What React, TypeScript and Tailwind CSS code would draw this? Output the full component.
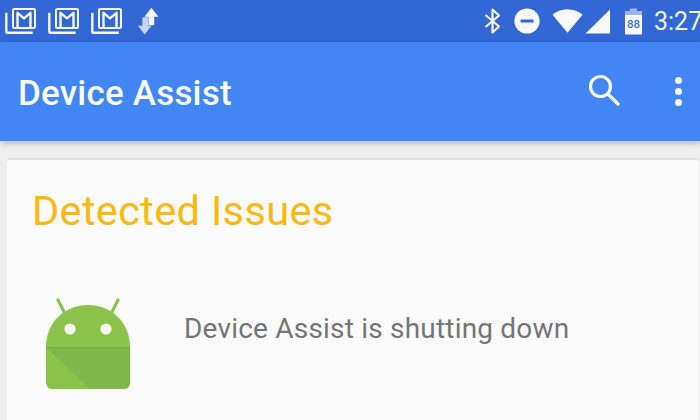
const font = "[font-family:Roboto,'Liberation_Sans',sans-serif]";

function GmailIcon() {
  return (
    <svg width="31" height="26" viewBox="0 0 31 26" fill="none" className="shrink-0">
      <path d="M1.300 6V23.700a1 1 0 0 0 1 1H26.500" stroke="#f4f7fe" strokeWidth="2.400" strokeLinecap="square" />
      <rect x="8" y="1" width="22" height="19" rx="1.200" stroke="#f4f7fe" strokeWidth="2" />
      <path d="M12.500 19V4.800L19 10.300l6.500-5.500V19" stroke="#f4f7fe" strokeWidth="2.400" strokeLinejoin="round" />
    </svg>
  );
}

function SyncIcon() {
  return (
    <svg width="21" height="29" viewBox="0 0 22 30" className="shrink-0">
      <path d="M7 28.600 0 19.500h4.600v-9h6v9H14z" fill="#c7d6f6" />
      <path d="M14 .7 21.400 10H17v9h-6v-9H6.800z" fill="#f4f7fe" />
    </svg>
  );
}

function StatusIcons() {
  return (
    <div className="flex items-center">
      {/* bluetooth */}
      <svg width="17" height="26" viewBox="0 0 17 26" fill="none">
        <path d="M1.500 7 15 18.500 8.500 24.500V1.500L15 7.500 1.500 19" stroke="#f4f7fe" strokeWidth="2.200" strokeLinejoin="round" />
      </svg>
      {/* do not disturb */}
      <svg width="26" height="26" viewBox="0 0 26 26" className="ml-[13px]">
        <circle cx="13" cy="13" r="12.600" fill="#f7f9fe" />
        <rect x="6.500" y="11.500" width="13" height="3" fill="#3367d6" />
      </svg>
      {/* wifi */}
      <svg width="31" height="26" viewBox="0 0 32 26" className="ml-[12px]">
        <path d="M16 25 .5 6.500C4.500 3 10 .8 16 .8S27.500 3 31.500 6.500z" fill="#f7f9fe" />
      </svg>
      {/* signal */}
      <svg width="26" height="25" viewBox="0 0 26 25" className="ml-[2px]">
        <path d="M.5 24.500 25 .5v24z" fill="#f7f9fe" />
      </svg>
      {/* battery */}
      <svg width="17" height="27" viewBox="0 0 17 27" className="ml-[14px]">
        <path d="M5 .5h7v2.500h5V7H0V3h5z" fill="#9db5ea" />
        <path d="M0 7h17v18.500a1 1 0 0 1-1 1H1a1 1 0 0 1-1-1z" fill="#f7f9fe" />
        <text x="8.500" y="20" textAnchor="middle" fontSize="11.500" fontWeight="500" fill="#3f6fd8" fontFamily="Roboto, sans-serif">88</text>
      </svg>
    </div>
  );
}

function AndroidIcon() {
  return (
    <svg width="84" height="92" viewBox="0 0 84 92" className="shrink-0">
      <path d="M12 2 18 14M72 2 66 14" stroke="#8bc34a" strokeWidth="3.200" strokeLinecap="round" />
      <path d="M0 49C0 24 19 7 42 7s42 17 42 42v36a6 6 0 0 1-6 6H6a6 6 0 0 1-6-6z" fill="#8bc34a" />
      <path d="M0 49h84v36a6 6 0 0 1-6 6H44z" fill="#7fb84a" />
      <path d="M0 49h84v1.500H0z" fill="#76ad45" />
      <circle cx="24" cy="31" r="5.600" fill="#f5f7f2" />
      <circle cx="60" cy="31" r="5.600" fill="#f5f7f2" />
    </svg>
  );
}

export default function App() {
  return (
    <div className={`${font} w-[700px] h-[420px] overflow-hidden bg-[#eeeeee] flex flex-col`}>
      {/* Status bar */}
      <div className="h-[42px] shrink-0 bg-[#3367d6] flex items-center justify-between pl-[5px]">
        <div className="flex items-center gap-[12px]">
          <GmailIcon />
          <GmailIcon />
          <GmailIcon />
          <div className="ml-[4px]">
            <SyncIcon />
          </div>
        </div>
        <div className="flex items-center gap-[12px] -mr-[3px]">
          <StatusIcons />
          <span className="text-[25px] leading-none text-[#f4f7fe] w-[49px] whitespace-nowrap">3:27</span>
        </div>
      </div>

      {/* App bar */}
      <div className="h-[99px] shrink-0 bg-[#4285f4] flex items-center justify-between pl-[18px] pr-[18px] shadow-[0_2px_6px_rgba(0,0,0,0.25)] relative">
        <h1 className="text-[35px] font-medium leading-none text-[#f7faff] tracking-[0.2px] pt-[4px]">Device Assist</h1>
        <div className="flex items-center gap-[55px]">
          <svg width="32" height="32" viewBox="0 0 32 32" fill="none" className="mb-[4px] -ml-[2px]">
            <circle cx="12.500" cy="12.500" r="10" stroke="#f7faff" strokeWidth="3.200" />
            <path d="M20 20 30 30" stroke="#f7faff" strokeWidth="3.400" strokeLinecap="round" />
          </svg>
          <div className="flex flex-col gap-[4px]">
            <div className="w-[7px] h-[7px] rounded-full bg-[#f7faff]" />
            <div className="w-[7px] h-[7px] rounded-full bg-[#f7faff]" />
            <div className="w-[7px] h-[7px] rounded-full bg-[#f7faff]" />
          </div>
        </div>
      </div>

      {/* Card */}
      <div className="flex-1 pt-[17px] pl-[7px] pr-[1px]">
        <div className="h-full rounded-t-[3px] bg-[#fafafa] border-t-2 border-[#e2e2e2] pt-[28px] pl-[25px]">
          <h2 className="text-[41.500px] leading-[46px] text-[#fbb80f] tracking-[0.35px]">Detected Issues</h2>
          <div className="flex items-start mt-[64px] pl-[14px]">
            <AndroidIcon />
            <p className="ml-[54px] mt-[15px] text-[28px] leading-[32px] text-[#757575] tracking-[0.2px]">Device Assist is shutting down</p>
          </div>
        </div>
      </div>
    </div>
  );
}
